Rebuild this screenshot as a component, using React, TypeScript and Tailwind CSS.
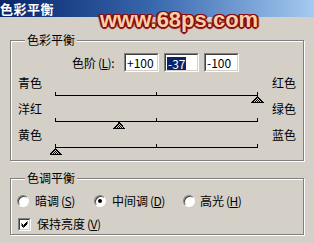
import React from "react";

const font = "font-['Noto_Sans_CJK_SC','Noto_Sans',sans-serif]";

function Key({ k }: { k: string }) {
  return (
    <span className="ml-[2px] tracking-[-0.5px]">
      (<span className="underline underline-offset-[1px]">{k}</span>)
    </span>
  );
}

function SunkenBox({ children, className = "" }: { children?: React.ReactNode; className?: string }) {
  return (
    <div className={`border border-t-[#808080] border-l-[#808080] border-b-white border-r-white ${className}`}>
      <div className="h-full w-full border border-t-[#404040] border-l-[#404040] border-b-[#d4d0c8] border-r-[#d4d0c8] bg-white">
        {children}
      </div>
    </div>
  );
}

function Track({ value }: { value: number }) {
  // line from 5 to 207, centre tick at 106
  const x = 106 + (value / 100) * 101;
  return (
    <svg width="214" height="11" className="block">
      <defs>
        <pattern id="hatch" width="2" height="2" patternUnits="userSpaceOnUse">
          <rect width="2" height="2" fill="#d4d0c8" />
          <rect width="1" height="1" fill="#000" />
          <rect x="1" y="1" width="1" height="1" fill="#000" />
        </pattern>
      </defs>
      <g shapeRendering="crispEdges">
        <rect x="5" y="3" width="203" height="1" fill="#000" />
        <rect x="5" y="0" width="1" height="4" fill="#000" />
        <rect x="106" y="0" width="1" height="4" fill="#000" />
        <rect x="207" y="0" width="1" height="4" fill="#000" />
      </g>
      <polygon
        points={`${x + 0.5},4.5 ${x + 5.5},10 ${x - 4.5},10`}
        fill="url(#hatch)"
        stroke="#000"
        strokeWidth="1"
        shapeRendering="crispEdges"
      />
    </svg>
  );
}

function SliderRow({ left, right, value }: { left: string; right: string; value: number }) {
  return (
    <div className="flex flex-col h-[26px]">
      <div className="flex h-[14px] leading-[14px]">
        <span className="ml-[7px] w-[254px]">{left}</span>
        <span>{right}</span>
      </div>
      <div className="ml-[39px] mt-[2px]">
        <Track value={value} />
      </div>
    </div>
  );
}

function Radio({ checked }: { checked?: boolean }) {
  return (
    <span className="relative inline-block w-[12px] h-[12px] rounded-full bg-white border-t border-l border-t-[#808080] border-l-[#808080] border-b border-r border-b-white border-r-white shadow-[inset_1px_1px_0_#404040]">
      {checked && <span className="absolute left-[3px] top-[3px] w-[4px] h-[4px] rounded-full bg-black" />}
    </span>
  );
}

function Group({ title, children, className = "" }: { title: string; children: React.ReactNode; className?: string }) {
  return (
    <fieldset
      className={`border border-[#808080] shadow-[inset_1px_1px_0_#fff,1px_1px_0_#fff] w-[294px] ${className}`}
    >
      <legend className="ml-[14px] px-[2px] bg-[#d4d0c8] text-[12px] leading-[14px]">{title}</legend>
      {children}
    </fieldset>
  );
}

export default function App() {
  return (
    <div className={`relative w-[314px] h-[243px] bg-[#d4d0c8] text-[12px] text-black overflow-hidden ${font}`}>
      <div className="h-[17px] bg-gradient-to-r from-[#0a246a] via-[#3a6ab0] to-[#a6caf0] flex items-center">
        <span className="text-white font-bold text-[13px] leading-[17px] tracking-[0.5px]">色彩平衡</span>
      </div>

      <div className="pl-[10px] pt-[16px] flex flex-col gap-[10px]">
        <Group title="色彩平衡" className="h-[128px]">
          <div className="flex items-center mt-[6px]">
            <span className="ml-[61px] w-[52px] leading-[14px]">
              色阶<Key k="L" />:
            </span>
            <div className="flex gap-[5px]">
              <SunkenBox className="w-[35px] h-[19px]">
                <span className="block pl-[1px] leading-[15px]">+100</span>
              </SunkenBox>
              <SunkenBox className="w-[35px] h-[19px]">
                <span className="inline-block ml-[1px] mt-[1px] px-[1px] bg-[#0a246a] text-white leading-[13px]">-37</span>
              </SunkenBox>
              <SunkenBox className="w-[35px] h-[19px]">
                <span className="block pl-[1px] leading-[15px]">-100</span>
              </SunkenBox>
            </div>
          </div>
          <div className="mt-[4px] flex flex-col">
            <SliderRow left="青色" right="红色" value={100} />
            <SliderRow left="洋红" right="绿色" value={-37} />
            <SliderRow left="黄色" right="蓝色" value={-100} />
          </div>
        </Group>

        <Group title="色调平衡" className="h-[64px]">
          <div className="flex items-center mt-[8px] h-[16px]">
            <label className="ml-[6px] w-[77px] flex items-center gap-[6px]">
              <Radio />
              <span>暗调<Key k="S" /></span>
            </label>
            <label className="w-[89px] flex items-center gap-[6px]">
              <Radio checked />
              <span>中间调<Key k="D" /></span>
            </label>
            <label className="flex items-center gap-[5px]">
              <Radio />
              <span>高光<Key k="H" /></span>
            </label>
          </div>
          <div className="flex items-center mt-[6px] ml-[7px] gap-[6px]">
            <SunkenBox className="w-[13px] h-[13px]">
              <svg width="9" height="9" className="block">
                <path d="M1.5 3.5 L3.5 5.5 L7.5 1.5 M1.5 4.5 L3.5 6.5 L7.5 2.5 M1.5 5.5 L3.5 7.5 L7.5 3.5" stroke="#000" strokeWidth="1" fill="none" />
              </svg>
            </SunkenBox>
            <span>保持亮度<Key k="V" /></span>
          </div>
        </Group>
      </div>

      <div className="absolute left-[100px] top-[9px] text-[22px] leading-[22px] font-bold font-['Liberation_Sans',sans-serif] text-[#f7cfa8] [text-shadow:1px_0_0_#8b0a0a,-1px_0_0_#8b0a0a,0_1px_0_#8b0a0a,0_-1px_0_#8b0a0a,1px_1px_0_#8b0a0a,-1px_-1px_0_#8b0a0a,1px_-1px_0_#8b0a0a,-1px_1px_0_#8b0a0a,2px_0_1px_#8b0a0a,-2px_0_1px_#8b0a0a,0_2px_1px_#8b0a0a]">
        www.68ps.com
      </div>
    </div>
  );
}
